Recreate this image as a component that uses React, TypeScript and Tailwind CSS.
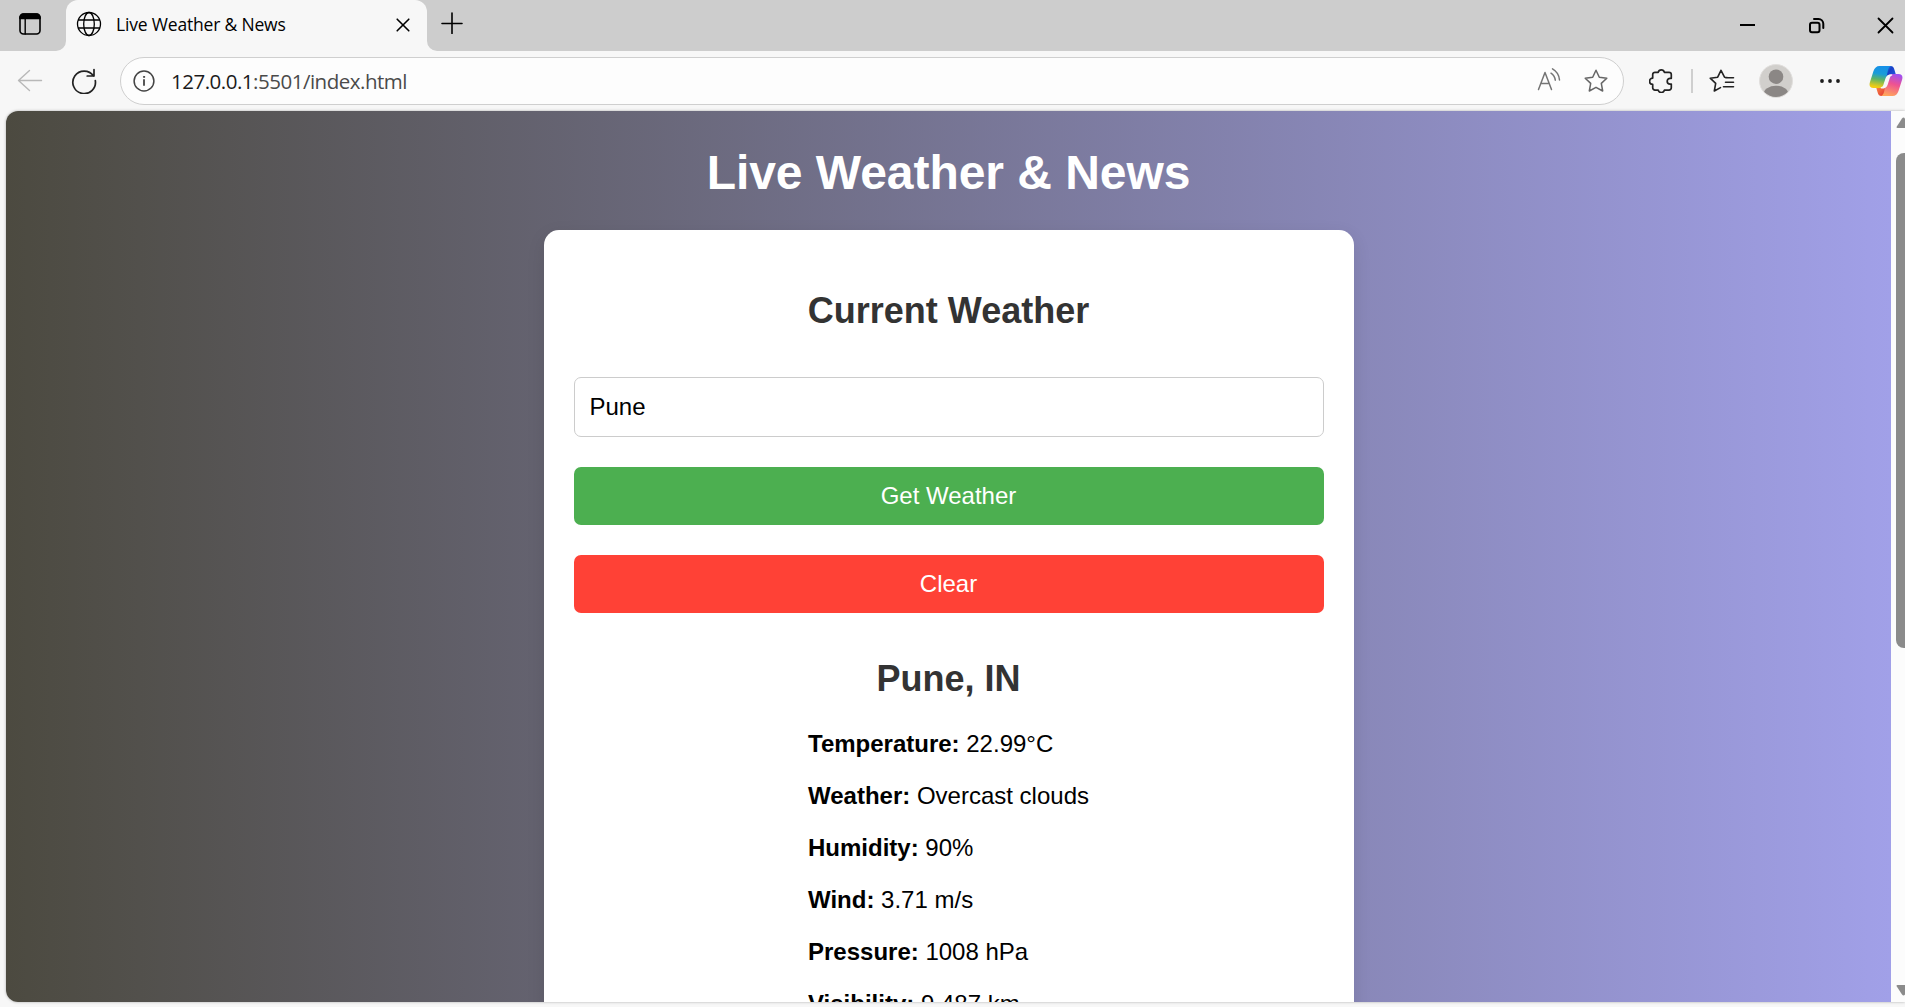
import type { ReactNode } from 'react'

const stats = [
  { label: 'Temperature:', value: '22.99°C' },
  { label: 'Weather:', value: 'Overcast clouds' },
  { label: 'Humidity:', value: '90%' },
  { label: 'Wind:', value: '3.71 m/s' },
  { label: 'Pressure:', value: '1008 hPa' },
  { label: 'Visibility:', value: '9.487 km' },
]

type IconProps = { w: number; h: number; className?: string; stroke?: number; children: ReactNode }

function Icon({ w, h, className = '', stroke = 1.5, children }: IconProps) {
  return (
    <svg
      width={w}
      height={h}
      viewBox={`0 0 ${w} ${h}`}
      fill="none"
      stroke="currentColor"
      strokeWidth={stroke}
      strokeLinecap="round"
      strokeLinejoin="round"
      className={`shrink-0 ${className}`}
    >
      {children}
    </svg>
  )
}

function TabCurve({ className }: { className: string }) {
  return (
    <svg width="10" height="10" viewBox="0 0 10 10" className={className}>
      <path d="M10 0v10H0A10 10 0 0 0 10 0Z" fill="#f7f7f7" />
    </svg>
  )
}

function TabStrip() {
  return (
    <div className="flex h-[51px] bg-[#cdcdcd] text-black">
      <div className="w-[66px] pt-[13px] pl-[19px]">
        <Icon w={22} h={22} stroke={1.6}>
          <rect x="1" y="1" width="20" height="20" rx="3.5" />
          <path d="M1 5.500V4.500A3.500 3.500 0 0 1 4.500 1h13A3.500 3.500 0 0 1 21 4.500v1Z" fill="currentColor" />
          <path d="M6.200 6v15" strokeWidth="1.400" />
        </Icon>
      </div>
      <div className="relative flex h-full w-[361px] rounded-t-[12px] bg-[#f7f7f7]">
        <TabCurve className="absolute bottom-0 -left-[10px]" />
        <TabCurve className="absolute bottom-0 -right-[10px] -scale-x-100" />
        <Icon w={26} h={26} stroke={1.3} className="mt-[11px] ml-[10px]">
          <circle cx="13" cy="13" r="11.500" />
          <ellipse cx="13" cy="13" rx="5.300" ry="11.500" />
          <path d="M2.500 9h21M2.500 17h21" />
        </Icon>
        <span className="mt-[10px] ml-[14px] flex-1 whitespace-nowrap font-['Open_Sans',sans-serif] text-[17.5px] leading-7 tracking-[-0.18px]">
          Live Weather &amp; News
        </span>
        <Icon w={14} h={14} stroke={1.6} className="mt-[18px] mr-[17px]">
          <path d="M1.200 1.200l11.600 11.600M12.800 1.200L1.200 12.800" />
        </Icon>
      </div>
      <Icon w={22} h={22} stroke={1.6} className="mt-[12px] ml-[14px]">
        <path d="M1 11.500h20M11 1v20.500" />
      </Icon>
      <div className="flex flex-1 justify-end">
        <Icon w={17} h={4} stroke={2} className="mt-[23px] mr-[52px]">
          <path d="M1 2h15" strokeLinecap="butt" />
        </Icon>
        <Icon w={17} h={17} stroke={2} className="mt-[17px] mr-[52px]">
          <rect x="2" y="5.800" width="9.500" height="9.500" rx="2" />
          <path d="M6 2h4.500a4.800 4.800 0 0 1 4.800 4.800V11" />
        </Icon>
        <Icon w={17} h={17} stroke={1.8} className="mt-[17px] mr-[11px]">
          <path d="M1.500 1.500l14 14M15.500 1.500l-14 14" />
        </Icon>
      </div>
    </div>
  )
}

const star = 'M12 1.300l3.300 6.900 7.500 1-5.500 5.200 1.400 7.600L12 18.300 5.300 22l1.400-7.600L1.200 9.200l7.500-1Z'

function CopilotLogo() {
  return (
    <svg width="34" height="32" viewBox="0 0 34 32" className="shrink-0">
      <defs>
        <linearGradient id="cpLeft" x1="0.500" y1="0" x2="0.350" y2="1">
          <stop offset="0" stopColor="#1690e8" />
          <stop offset="0.350" stopColor="#1a9cd8" />
          <stop offset="0.600" stopColor="#5cb368" />
          <stop offset="0.950" stopColor="#f2cc14" />
        </linearGradient>
        <linearGradient id="cpTop" x1="0" y1="0" x2="1" y2="0.700">
          <stop offset="0" stopColor="#2bb5ee" />
          <stop offset="0.500" stopColor="#1840c8" />
          <stop offset="1" stopColor="#2458dc" />
        </linearGradient>
        <linearGradient id="cpRight" x1="0.700" y1="0" x2="0.400" y2="1">
          <stop offset="0" stopColor="#a050f0" />
          <stop offset="0.450" stopColor="#ee5292" />
          <stop offset="1" stopColor="#ffa45c" />
        </linearGradient>
        <linearGradient id="cpBottom" x1="0" y1="0" x2="1" y2="1">
          <stop offset="0" stopColor="#ff9a48" />
          <stop offset="0.700" stopColor="#e84838" />
        </linearGradient>
      </defs>
      <path d="M14 1h7.500c2.500 0 3.300 1.500 4 4L27 10h-5c-4 0-5 2-6 5Z" fill="url(#cpTop)" />
      <path d="M20 31h-7.500c-2.500 0-3.300-1.500-4-4L7 22h5c4 0 5-2 6-5Z" fill="url(#cpBottom)" />
      <path d="M20 1H10.500C7.500 1 5.500 3 4.500 6L1 17c-1.200 3.800 0 6 3.500 6H11c3 0 4-1.500 5-4.500L19 5c.600-2 1.500-3.500 3-4Z" fill="url(#cpLeft)" />
      <path d="M14 31h9.500c3 0 5-2 6-5L33 15c1.200-3.800 0-6-3.500-6H23c-3 0-4 1.500-5 4.500L15 27c-.600 2-1.500 3.500-3 4Z" fill="url(#cpRight)" />
      <path d="M22.500 10c-2.800 0-4.300.800-5.100 3.300l-2.400 7.200c-.500 1.500-1.200 2.300-2.600 2.300 2.900 0 4.600-.700 5.500-3.400l2.300-7.200c.500-1.400 1-2.200 2.300-2.200Z" fill="#f7f7f7" stroke="#f7f7f7" strokeWidth="1.600" strokeLinejoin="round" />
    </svg>
  )
}

function Toolbar() {
  return (
    <div className="flex h-[60px] items-center overflow-hidden bg-[#f7f7f7] text-[#222]">
      <Icon w={26} h={24} stroke={1.4} className="ml-[17px] text-[#b8b8b8]">
        <path d="M24.500 11.500H1.500M12.500 1.500l-11 10 11 10" />
      </Icon>
      <Icon w={26} h={26} stroke={1.7} className="ml-[28px]">
        <path d="M22.500 8A11.300 11.300 0 1 0 24.300 12.500M23 1.500V8h-6.800" />
      </Icon>
      <div className="ml-[23px] flex h-[48px] w-[1504px] shrink-0 items-center rounded-full border border-[#cfcfcf] bg-[#fdfdfd]">
        <Icon w={22} h={22} stroke={1.5} className="ml-[12px] text-[#444]">
          <circle cx="11" cy="11" r="9.900" />
          <path d="M11 10v5" strokeWidth="1.800" />
          <circle cx="11" cy="6.900" r="0.600" fill="currentColor" strokeWidth="1" />
        </Icon>
        <span className="ml-[16px] flex-1 whitespace-nowrap font-['Open_Sans',sans-serif] text-[20.5px] leading-7 tracking-[-0.49px] text-[#4a4a4a]">
          <span className="text-[#1b1b1b]">127.0.0.1</span>:5501/index.html
        </span>
        <Icon w={24} h={24} stroke={1.5} className="mb-[4px] text-[#757575]">
          <path d="M1.500 22.500L8 5.500l6.500 17M4 16.500h8M14 6.200a10 10 0 0 1 4.300 7M15.500 1.800a14 14 0 0 1 7 11.200" />
        </Icon>
        <Icon w={24} h={24} stroke={1.5} className="ml-[23px] mr-[15px] text-[#666]">
          <path d={star} />
        </Icon>
      </div>
      <Icon w={24} h={24} stroke={1.7} className="ml-[25px]">
        <path d="M6 3.300h3.200a3.200 3.200 0 0 1 6.200 0h4.600a2.300 2.300 0 0 1 2.300 2.300V9.300h-1.200a2.900 2.900 0 0 0 0 5.800h1.200v3.700a2.300 2.300 0 0 1-2.300 2.300h-4.600a3.200 3.200 0 0 1-6.200 0H6a2.300 2.300 0 0 1-2.300-2.300v-3.400a3.100 3.100 0 0 1 0-6.300V5.600A2.300 2.300 0 0 1 6 3.300Z" />
      </Icon>
      <div className="ml-[18px] h-[24px] w-[2px] shrink-0 bg-[#cfcfcf]" />
      <Icon w={26} h={24} stroke={1.6} className="ml-[16px]">
        <path d="M19 8.800l-3.500-.6L12 1.300 8.700 8.200l-7.500 1 5.500 5.200L5.300 22l6.200-3.400M16.500 8.800h8M16.500 13.200h8M14.500 17.700h10" />
      </Icon>
      <svg width="34" height="34" viewBox="0 0 34 34" className="ml-[24px] shrink-0">
        <defs>
          <clipPath id="avatar">
            <circle cx="17" cy="17" r="16" />
          </clipPath>
        </defs>
        <circle cx="17" cy="17" r="16.500" fill="#d1cfcc" stroke="#e1dfdd" />
        <circle cx="17" cy="12.700" r="7.300" fill="#8b8785" />
        <ellipse cx="17" cy="30" rx="12.500" ry="8.300" fill="#8b8785" clipPath="url(#avatar)" />
      </svg>
      <svg width="20" height="4" viewBox="0 0 20 4" fill="#1c1c1c" className="ml-[27px] shrink-0">
        <circle cx="2" cy="2" r="1.900" />
        <circle cx="10" cy="2" r="1.900" />
        <circle cx="18" cy="2" r="1.900" />
      </svg>
      <div className="ml-[29px] flex shrink-0">
        <CopilotLogo />
      </div>
    </div>
  )
}

function WeatherCard() {
  return (
    <section className="mt-[29px] flex w-[810px] flex-col items-center rounded-t-[15px] bg-white px-[30px] pt-[60px] shadow-[0_6px_18px_rgba(0,0,0,0.1)]">
      <h2 className="text-[36px] leading-[42px] font-bold text-[#333]">Current Weather</h2>
      <input
        defaultValue="Pune"
        className="mt-[45px] h-[60px] w-full shrink-0 rounded-[7px] border border-[#ccc] bg-white px-[15px] text-[24px] text-black outline-none"
      />
      <button className="mt-[30px] h-[58px] w-full shrink-0 rounded-[7px] bg-[#4caf50] text-[24px] text-white">Get Weather</button>
      <button className="mt-[30px] h-[58px] w-full shrink-0 rounded-[7px] bg-[#ff4136] text-[24px] text-white">Clear</button>
      <div className="mt-[45px] flex flex-col">
        <h2 className="text-center text-[36px] leading-[42px] font-bold text-[#333]">Pune, IN</h2>
        <div className="mt-[30px] flex flex-col gap-6">
          {stats.map((s) => (
            <p key={s.label} className="text-[24px] leading-7 text-black">
              <strong className="font-bold">{s.label}</strong> {s.value}
            </p>
          ))}
        </div>
      </div>
    </section>
  )
}

function Scrollbar() {
  return (
    <div className="flex h-full w-[14px] shrink-0 flex-col overflow-hidden bg-[#fcfcfc] pl-[5px]">
      <svg width="18" height="12" viewBox="0 0 18 12" className="mt-[6px] shrink-0" fill="#8b8b8b">
        <path d="M1.500 11Q0 11 .8 9.400L6 1.500Q7.500-.5 9 1.500l5.200 7.900Q15 11 13.500 11Z" />
      </svg>
      <div className="mt-[24px] h-[495px] w-[18px] shrink-0 rounded-[8px] bg-[#8b8b8b]" />
      <div className="flex-1" />
      <svg width="18" height="12" viewBox="0 0 18 12" className="mb-[5px] shrink-0" fill="#8b8b8b">
        <path d="M1.500 0Q0 0 .8 1.600L6 9.500q1.500 2 3 0l5.200-7.900Q15 0 13.500 0Z" />
      </svg>
    </div>
  )
}

export default function App() {
  return (
    <div className="flex h-[1007px] w-[1905px] flex-col overflow-hidden bg-[#f7f7f7] font-['Liberation_Sans',Arial,sans-serif]">
      <TabStrip />
      <Toolbar />
      <div className="ml-[6px] flex h-[891px] w-[1899px] overflow-hidden rounded-l-[12px] shadow-[0_0_3px_rgba(0,0,0,0.3)]">
        <main className="flex w-[1885px] shrink-0 flex-col items-center overflow-hidden bg-linear-to-r/srgb from-[#4c4a40] to-[#a1a0e8] pt-[34px]">
          <h1 className="text-[48px] leading-[56px] font-bold tracking-[-0.05px] text-white">Live Weather &amp; News</h1>
          <WeatherCard />
        </main>
        <Scrollbar />
      </div>
    </div>
  )
}
